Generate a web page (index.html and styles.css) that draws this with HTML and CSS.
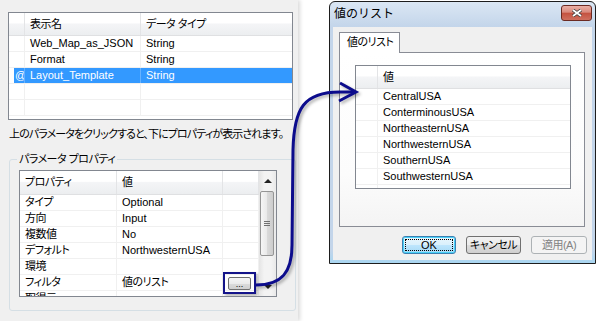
FILE: index.html
```html
<!DOCTYPE html>
<html lang="ja">
  <head>
    <meta charset="UTF-8" />
    <meta name="viewport" content="width=device-width, initial-scale=1.0" />
    <title>値のリスト</title>
    <link rel="stylesheet" href="styles.css">
  </head>
  <body>
    <div id="page">
      <div id="params">
        <div class="list-view" id="param-list">
          <div class="lv-row lv-head">
            <span></span><span>表示名</span><span>データ タイプ</span>
          </div>
          <div class="lv-row">
            <span></span><span class="en">Web_Map_as_JSON</span><span class="en">String</span>
          </div>
          <div class="lv-row">
            <span></span><span class="en">Format</span><span class="en">String</span>
          </div>
          <div class="lv-row sel">
            <span class="en">@</span><span class="en">Layout_Template</span><span class="en">String</span>
          </div>
          <div class="lv-row"><span></span><span></span><span></span></div>
          <div class="lv-row"><span></span><span></span><span></span></div>
        </div>

        <p id="hint">上のパラメータをクリックすると、下にプロパティが表示されます。</p>

        <fieldset id="prop-group">
          <legend>パラメータ プロパティ</legend>
          <div id="prop-grid">
            <div id="prop-table">
              <div class="pg-row pg-head"><span>プロパティ</span><span>値</span><span></span></div>
              <div class="pg-row"><span>タイプ</span><span class="en">Optional</span><span></span></div>
              <div class="pg-row"><span>方向</span><span class="en">Input</span><span></span></div>
              <div class="pg-row"><span>複数値</span><span class="en">No</span><span></span></div>
              <div class="pg-row"><span>デフォルト</span><span class="en">NorthwesternUSA</span><span></span></div>
              <div class="pg-row"><span>環境</span><span></span><span></span></div>
              <div class="pg-row">
                <span>フィルタ</span><span>値のリスト</span>
                <span class="btn-cell">
                  <button class="dots-btn">...</button>
                  <i class="callout-box"></i>
                </span>
              </div>
              <div class="pg-row"><span>取得元</span><span></span><span></span></div>
            </div>
            <div class="vscroll">
              <span class="sb-btn"><i class="tri up"></i></span>
              <span class="thumb"><i class="grip"></i></span>
              <span class="sb-track"></span>
              <span class="sb-btn down-btn"><i class="tri down"></i></span>
            </div>
          </div>
        </fieldset>
      </div>

      <div id="desk">
        <div class="window">
          <div class="titlebar">
            <span class="title">値のリスト</span>
            <button class="close-btn">
              <svg width="12" height="8" viewBox="0 0 12 8">
                <path d="M2 1 L10 7 M10 1 L2 7" stroke="#3c3c3c" stroke-width="3.4" />
                <path d="M2 1 L10 7 M10 1 L2 7" stroke="#fff" stroke-width="1.8" />
              </svg>
            </button>
          </div>
          <div class="client">
            <div class="tabs"><span class="tab">値のリスト</span></div>
            <div class="tab-page">
              <div class="list-view" id="value-list">
                <div class="lv-row lv-head"><span></span><span>値</span></div>
                <div class="lv-row"><span></span><span class="en">CentralUSA</span></div>
                <div class="lv-row"><span></span><span class="en">ConterminousUSA</span></div>
                <div class="lv-row"><span></span><span class="en">NortheasternUSA</span></div>
                <div class="lv-row"><span></span><span class="en">NorthwesternUSA</span></div>
                <div class="lv-row"><span></span><span class="en">SouthernUSA</span></div>
                <div class="lv-row"><span></span><span class="en">SouthwesternUSA</span></div>
                <div class="lv-row"><span></span><span></span></div>
              </div>
            </div>
            <div class="buttons">
              <button class="btn default"><span>OK</span></button>
              <button class="btn">キャンセル</button>
              <button class="btn" disabled>適用(A)</button>
            </div>
          </div>
        </div>
      </div>

      <svg id="callout" width="596" height="321" viewBox="0 0 596 321">
        <path d="M256 285 C282 285, 292 272, 292 245 L293 150 C294 108, 304 92, 340 92 L354 92" />
        <path d="M340 83 L356 92 L339 101" />
      </svg>
    </div>
  </body>
</html>
```

FILE: styles.css
```css
* {
  margin: 0;
  padding: 0;
  box-sizing: border-box;
}
html,
body {
  width: 100%;
  height: 100%;
}
body {
  background: #fff;
  font-family: "Liberation Sans", "Noto Sans CJK JP", sans-serif;
  font-size: 11px;
  letter-spacing: -0.5px;
  font-feature-settings: "palt";
  color: #000;
}
.en {
  font-size: 11px;
  letter-spacing: 0;
}
#page {
  position: relative;
  display: flex;
  height: 321px;
  overflow: hidden;
}

/* left: parameter panel */
#params {
  width: 298px;
  flex-shrink: 0;
  height: 100%;
  padding: 12px 0 0 8px;
  background: #f0f0f0;
  box-shadow: 2px 0 4px rgba(0, 0, 0, 0.15);
}
.list-view {
  background: #fff;
  border: 1px solid #828790;
  overflow: hidden;
}
#param-list {
  width: 285px;
  height: 108px;
}
.lv-row {
  display: grid;
  height: 16px;
  line-height: 15px;
  border-bottom: 1px solid #f0f0f0;
}
#param-list .lv-row {
  grid-template-columns: 16px 116px 1fr;
}
.lv-row span {
  padding-left: 5px;
  border-right: 1px solid #f0f0f0;
  white-space: nowrap;
  overflow: hidden;
}
.lv-row span:last-child {
  border-right: none;
}
.lv-head {
  height: 23px;
  line-height: 22px;
  background: linear-gradient(#fff, #fff 45%, #f4f5f7 50%, #eceef0);
  border-bottom-color: #dfe0e2;
}
.lv-head span {
  border-right-color: #e3e4e6;
}
.lv-row.sel {
  background: linear-gradient(90deg, transparent 5px, #3399ff 5px);
  color: #fff;
}
.lv-row.sel span {
  border-right-color: rgba(255, 255, 255, 0.25);
}
#param-list .sel span:first-child {
  padding-left: 6px;
}

#hint {
  margin-top: 6px;
  padding-left: 1px;
  line-height: 16px;
  letter-spacing: -0.9px;
  white-space: nowrap;
}

#prop-group {
  width: 287px;
  margin: 10px 0 0 1px;
  padding: 4px 18px 13px 9px;
  border: 1px solid #d5dfe5;
  border-radius: 3px;
}
#prop-group legend {
  margin-left: -2px;
  padding: 0 2px;
  line-height: 14px;
}
#prop-grid {
  display: flex;
  width: 258px;
  height: 127px;
  border: 1px solid #828790;
  background: #fff;
}
#prop-table {
  flex: 1;
  overflow: hidden;
}
.pg-row {
  display: grid;
  grid-template-columns: 97px 106px 1fr;
  height: 16px;
  line-height: 15px;
  border-bottom: 1px solid #f0f0f0;
}
.pg-row span {
  padding-left: 5px;
  border-right: 1px solid #f0f0f0;
  white-space: nowrap;
}
.pg-head {
  height: 24px;
  line-height: 23px;
  background: linear-gradient(#fff, #fff 45%, #f4f5f7 50%, #eceef0);
  border-bottom-color: #dfe0e2;
}
.pg-head span {
  border-right-color: #e3e4e6;
}
.pg-row .btn-cell {
  position: relative;
  padding-left: 0;
}
.dots-btn {
  display: block;
  width: 23px;
  height: 13px;
  margin: 2px 0 0 5px;
  border: 1px solid #707070;
  border-radius: 2px;
  background: linear-gradient(#f6f6f6, #ebebeb 50%, #dcdcdc 51%, #cfcfcf);
  font: 9px/8px "Liberation Sans", sans-serif;
  text-align: center;
}
.callout-box {
  position: absolute;
  left: 0;
  top: -3px;
  width: 33px;
  height: 22px;
  border: 2px solid #14148a;
  box-shadow: 2px 2px 3px rgba(0, 0, 0, 0.3);
}

.vscroll {
  display: flex;
  flex-direction: column;
  width: 17px;
  background: linear-gradient(90deg, #e4e4e4, #f3f3f3 30%, #f3f3f3 70%, #e9e9e9);
}
.sb-btn {
  display: flex;
  align-items: center;
  justify-content: center;
  height: 20px;
}
.down-btn {
  height: 18px;
}
.tri {
  width: 0;
  height: 0;
  border-left: 4px solid transparent;
  border-right: 4px solid transparent;
}
.tri.up {
  border-bottom: 4px solid #222;
}
.tri.down {
  border-top: 4px solid #222;
}
.thumb {
  display: flex;
  align-items: center;
  justify-content: center;
  height: 65px;
  margin: 0 2px 0 1px;
  border: 1px solid #959595;
  border-radius: 2px;
  background: linear-gradient(90deg, #f6f6f6, #e9e9e9 50%, #dadada 51%, #cdcdcd);
}
.grip {
  width: 6px;
  height: 5px;
  background: repeating-linear-gradient(#707070 0 1px, transparent 1px 2px);
}
.sb-track {
  flex: 1;
}

/* right: dialog */
#desk {
  flex: 1;
  padding: 1px 0 0 31px;
}
.window {
  display: flex;
  flex-direction: column;
  width: 267px;
  height: 263px;
  padding: 0 3px 3px;
  border: 1px solid #1d1d1d;
  border-radius: 6px 6px 0 0;
  background: linear-gradient(#dbe7f4, #c3d5ea 25px, #c3d5ea 95%, #a9d6f1);
}
.titlebar {
  display: flex;
  justify-content: space-between;
  height: 25px;
}
.title {
  padding-left: 1px;
  line-height: 25px;
  font-size: 12px;
  letter-spacing: 0;
  font-feature-settings: normal;
}
.close-btn {
  display: flex;
  align-items: center;
  justify-content: center;
  width: 31px;
  height: 16px;
  margin-top: 3px;
  border: 1px solid #6b2a22;
  border-radius: 3px;
  background: linear-gradient(#eab0a6, #d9887b 45%, #c4513f 50%, #cf6f5e);
}
.client {
  flex: 1;
  padding: 5px 7px 6px 6px;
  background: #f0f0f0;
}
.tabs {
  display: flex;
  height: 20px;
}
.tab {
  position: relative;
  z-index: 1;
  width: 61px;
  height: 21px;
  padding-left: 7px;
  line-height: 19px;
  white-space: nowrap;
  border: 1px solid #898c95;
  border-bottom: none;
  background: #fff;
}
.tab-page {
  height: 175px;
  padding: 12px 0 0 15px;
  border: 1px solid #898c95;
  background: linear-gradient(#fff, #fcfcfc 70%, #f4f4f4);
}
#value-list {
  width: 216px;
  height: 124px;
}
#value-list .lv-row {
  grid-template-columns: 22px 1fr;
}

.buttons {
  display: flex;
  justify-content: flex-end;
  gap: 10px;
  margin: 9px -2px 0 0;
}
.btn {
  width: 55px;
  height: 18px;
  border: 1px solid #707070;
  border-radius: 3px;
  background: linear-gradient(#f2f2f2, #ebebeb 50%, #dddddd 51%, #cfcfcf);
  font: 11px/16px "Liberation Sans", "Noto Sans CJK JP", sans-serif;
  letter-spacing: -0.5px;
  font-feature-settings: "palt";
  white-space: nowrap;
  color: #000;
}
.btn.default {
  width: 54px;
  padding: 2px;
  border-color: #3c7fb1;
  box-shadow: inset 0 0 0 1px #48d1f8;
  background: linear-gradient(#eaf6fd, #d9f0fc 50%, #bee6fd 51%, #a7d9f5);
  letter-spacing: 0;
}
.btn.default span {
  display: block;
  height: 12px;
  line-height: 11px;
  border: 1px dotted #000;
}
.btn:disabled {
  width: 56px;
  border-color: #adb2b5;
  background: #f4f4f4;
  color: #838383;
}

/* annotation arrow */
#callout {
  position: absolute;
  left: 0;
  top: 0;
  pointer-events: none;
  filter: drop-shadow(2px 2px 1.5px rgba(0, 0, 0, 0.3));
}
#callout path {
  fill: none;
  stroke: #0c0c8c;
  stroke-width: 3;
}
```
